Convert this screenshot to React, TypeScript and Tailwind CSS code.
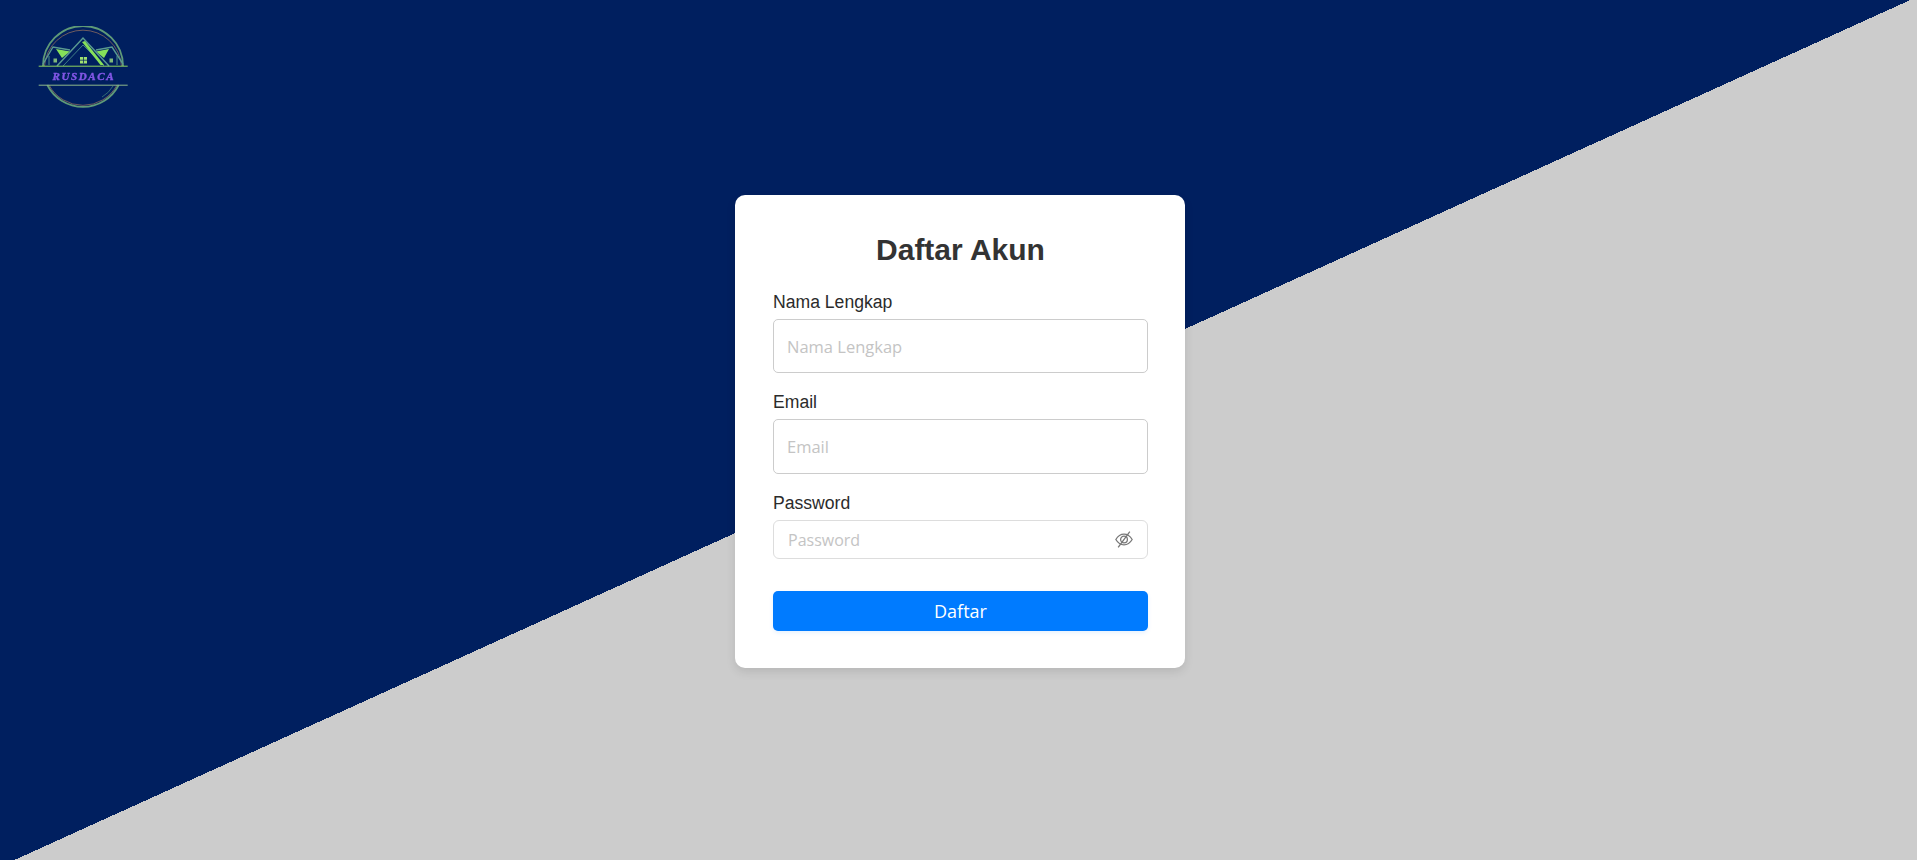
function Logo() {
  return (
    <svg viewBox="18 16 90 82" className="h-[82px] w-[90px] blur-[0.35px]" fill="none">
      {/* ring, cut by the name band */}
      <path d="M23 56 A40 40 0 0 1 103 56" stroke="#5f9a78" strokeWidth="1.8" />
      <path d="M24.500 56 A38.600 38.600 0 0 1 101.500 56" stroke="#b9855f" strokeWidth="0.6" />
      <path d="M27.300 75 A40 40 0 0 0 98.700 75" stroke="#5f9a78" strokeWidth="1.8" />
      <path d="M29 75 A38.600 38.600 0 0 0 97 75" stroke="#b9855f" strokeWidth="0.6" />
      <path d="M82 87 A30 30 0 0 0 93 76" stroke="#3f7f7a" strokeWidth="0.8" />
      {/* side roofs */}
      <path d="M23 54 L33 37 L50 40" stroke="#5a9a90" strokeWidth="1.4" />
      <path d="M103 54 L92 37 L76 40" stroke="#5a9a90" strokeWidth="1.4" />
      <path d="M36 39 L50 41.500 L42 48 Z" fill="#86e05a" />
      <path d="M89 39 L76 41.500 L84 48 Z" fill="#86e05a" />
      <path d="M29 55 V46 M97 55 V46" stroke="#4f8f86" strokeWidth="1" />
      {/* main roof */}
      <path d="M37 56 L63 28 L89 56" stroke="#5a9a90" strokeWidth="1.5" />
      <path d="M43 56 L63 35 L84 56" stroke="#3f7f86" strokeWidth="1" />
      <path d="M62 32 L65 31 L84 55 L80.500 55 Z" fill="#86e05a" />
      {/* windows */}
      <path d="M60 47 H67 V53.500 H60 Z" fill="#9fe070" />
      <path d="M63.500 47 V53.500 M60 50.200 H67" stroke="#0a2a5f" strokeWidth="0.8" />
      <path d="M33.500 48.500 H37 V52.500 H33.500 Z M89.500 48.500 H93 V52.500 H89.500 Z" fill="#7fb87a" />
      {/* name band */}
      <path d="M18.700 56.200 H107.700" stroke="#8fd45f" strokeWidth="1" />
      <path d="M18.700 75.200 H107.700" stroke="#8fb88a" strokeWidth="1" />
      <text
        x="63"
        y="69.500"
        textAnchor="middle"
        fill="#8257e6"
        stroke="#8257e6"
        strokeWidth="0.4"
        fontFamily="'Liberation Serif', serif"
        fontSize="11"
        fontStyle="italic"
        fontWeight="700"
        textLength="61"
      >
        RUSDACA
      </text>
    </svg>
  );
}

function EyeSlash() {
  return (
    <svg viewBox="0 0 17 16" className="absolute top-[11px] right-[15px] h-[17px] w-[18px] text-[#777777]" fill="none" stroke="currentColor" strokeWidth="1.2">
      <path d="M0.800 8 C3 4.300 5.600 3 8.500 3 C11.400 3 14 4.300 16.200 8 C14 11.700 11.400 13 8.500 13 C5.600 13 3 11.700 0.800 8 Z" />
      <circle cx="8.500" cy="8" r="3.200" />
      <path d="M3 15.500 L14 0.500" />
    </svg>
  );
}

export default function App() {
  return (
    <div className="relative flex h-[860px] w-full items-start justify-center overflow-hidden bg-[linear-gradient(155.6deg,#001f5f_50.1%,#cccccc_50.1%)]">
      <div className="absolute left-[38px] top-[26px]">
        <Logo />
      </div>

      <div className="mt-[195px] ml-[3px] flex h-[473px] w-[450px] flex-col rounded-[10px] bg-white pt-[32px] pr-[37px] pl-[38px] font-['Liberation_Sans',sans-serif] shadow-[0_4px_10px_rgba(0,0,0,0.1)]">
        <h2 className="mb-[19px] text-center text-[30px] leading-[46px] font-bold text-[#333333]">Daftar Akun</h2>

        <label className="mb-[7px] text-[17.6px] leading-[20px] text-[#2b2b2b]">Nama Lengkap</label>
        <input
          placeholder="Nama Lengkap"
          className="mb-[19px] h-[54px] w-full rounded-[5px] border border-[#cccccc] px-[13px] font-['Open_Sans',sans-serif] text-[16.5px] outline-none placeholder:text-[#c4c4c4]"
        />

        <label className="mb-[7px] text-[17.6px] leading-[20px] text-[#2b2b2b]">Email</label>
        <input
          placeholder="Email"
          className="mb-[19px] h-[55px] w-full rounded-[5px] border border-[#cccccc] px-[13px] font-['Open_Sans',sans-serif] text-[16.5px] outline-none placeholder:text-[#c4c4c4]"
        />

        <label className="mb-[7px] text-[17.6px] leading-[20px] text-[#2b2b2b]">Password</label>
        <div className="relative mb-[32px]">
          <input
            placeholder="Password"
            className="h-[39px] w-full rounded-[6px] border border-[#dddddd] pr-[40px] pl-[14px] font-['Open_Sans',sans-serif] text-base outline-none placeholder:text-[#c4c4c4]"
          />
          <EyeSlash />
        </div>

        <button className="h-[40px] w-full rounded-[5px] bg-[#007bff] font-['Open_Sans',sans-serif] text-lg text-white shadow-[0_2px_4px_rgba(0,123,255,0.1)]">
          Daftar
        </button>
      </div>
    </div>
  );
}
